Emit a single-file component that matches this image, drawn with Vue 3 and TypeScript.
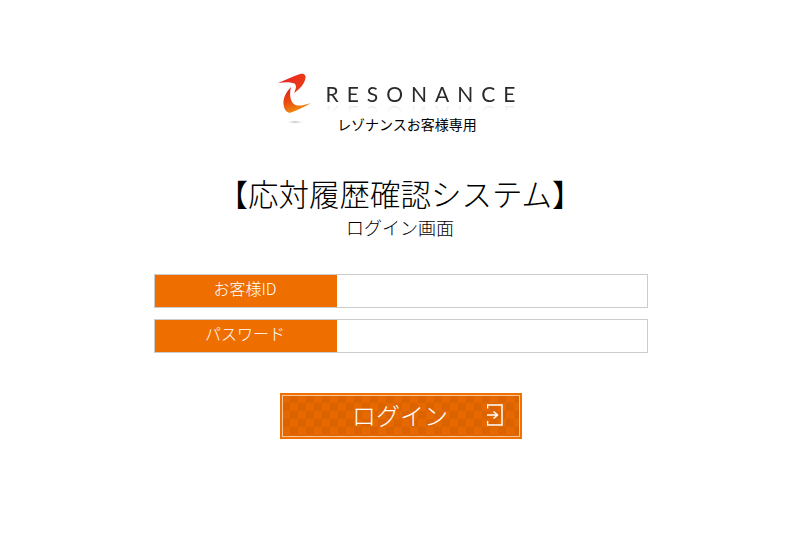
<script setup lang="ts">
import { ref } from 'vue'
const customerId = ref('')
const password = ref('')
</script>

<template>
  <main class="page">
    <header class="brand">
      <div class="logo-row">
        <svg class="mark" viewBox="278 72 36 53" width="36" height="53" aria-hidden="true">
          <defs>
            <linearGradient id="swoosh-a" x1="0" y1="0" x2="1" y2="0.3">
              <stop offset="0" stop-color="#e8202a" />
              <stop offset="1" stop-color="#ea3a16" />
            </linearGradient>
            <linearGradient id="swoosh-b" x1="0" y1="0" x2="0.4" y2="1">
              <stop offset="0" stop-color="#d81e22" />
              <stop offset="0.55" stop-color="#ea4a12" />
              <stop offset="1" stop-color="#f0900c" />
            </linearGradient>
            <radialGradient id="shade">
              <stop offset="0" stop-color="#b5b5b5" />
              <stop offset="1" stop-color="#ffffff" stop-opacity="0" />
            </radialGradient>
          </defs>
          <path d="M279 83 C287 79.500 295 76 301 74 C305 73 307 75 306.500 78 C305.500 84 301 89 295 93 C297.500 88 297.500 85 295.500 83.500 C290 81.500 285 82 279 83 Z" fill="url(#swoosh-a)" />
          <path d="M292 87 C287 92 284 98 284.500 104 C285 110 288 113.500 292 112.500 C298 110.500 305 107 312 103 C306 105 300 106.500 296.500 105 C291.500 103 290 95 292 87 Z" fill="url(#swoosh-b)" />
          <ellipse cx="296" cy="122" rx="10" ry="2" fill="url(#shade)" />
        </svg>
        <span class="wordmark">RESONANCE</span>
      </div>
      <p class="tagline">レゾナンスお客様専用</p>
    </header>

    <h1 class="title">【応対履歴確認システム】</h1>
    <p class="subtitle">ログイン画面</p>

    <form class="form" @submit.prevent>
      <label class="field">
        <span class="field-label">お客様ID</span>
        <input v-model="customerId" class="field-input" type="text" />
      </label>
      <label class="field">
        <span class="field-label">パスワード</span>
        <input v-model="password" class="field-input" type="password" />
      </label>
      <button class="login" type="submit">
        <span class="login-text">ログイン</span>
        <svg class="login-icon" viewBox="0 0 16 22" width="16" height="22" aria-hidden="true">
          <path d="M0.500 4.500 V1 H15 V21 H0.500 V17 M0 11 H10 M6.500 7.500 L10.500 11 L6.500 14.500" fill="none" stroke="#fff" stroke-width="1.500" />
        </svg>
      </button>
    </form>
  </main>
</template>

<style scoped>
.page {
  display: flex;
  flex-direction: column;
  align-items: center;
  width: 800px;
  height: 533px;
  padding-top: 72px;
  box-sizing: border-box;
  background: #fff;
  color: #000;
  font-family: "Noto Sans CJK JP", "Liberation Sans", sans-serif;
  font-weight: 300;
}
.brand {
  display: flex;
  flex-direction: column;
  align-items: center;
  height: 64px;
}
.logo-row {
  display: flex;
  align-items: flex-start;
  height: 50px;
  margin-left: -8px;
}
.mark {
  display: block;
  margin-right: 13px;
}
.wordmark {
  margin-top: 9px;
  font-family: "Lato", sans-serif;
  font-weight: 400;
  font-size: 21px;
  line-height: 26px;
  letter-spacing: 8px;
  margin-right: -8px;
  color: #2a2a2a;
  -webkit-box-reflect: below -6px linear-gradient(transparent 55%, rgba(0, 0, 0, 0.14));
}
.tagline {
  margin: -8px 0 0 14px;
  font-size: 14px;
  font-weight: 400;
  line-height: 20px;
}
.title {
  margin: 33px 0 0;
  font-size: 30.5px;
  font-weight: 300;
  line-height: 48px;
}
.subtitle {
  margin: -2px 0 0;
  font-size: 18px;
  line-height: 25px;
}
.form {
  display: flex;
  flex-direction: column;
  align-items: center;
  margin: 34px 0 0 2px;
}
.field {
  display: flex;
  width: 494px;
  height: 34px;
  margin-bottom: 11px;
  box-sizing: border-box;
  border: 1px solid #ccc;
}
.field-label {
  display: flex;
  align-items: center;
  justify-content: center;
  width: 182px;
  background: #ee6e00;
  color: #fff;
  font-family: "Noto Sans CJK JP", sans-serif;
  font-size: 16px;
  padding: 0 2px 6px 0;
  box-sizing: border-box;
}
.field-input {
  flex: 1;
  min-width: 0;
  border: 0;
  padding: 0 8px;
  background: #fff;
  outline: none;
}
.login {
  display: flex;
  align-items: center;
  justify-content: center;
  position: relative;
  width: 242px;
  height: 46px;
  margin-top: 29px;
  padding: 0 2px 2px 0;
  box-sizing: border-box;
  border: 2px solid #f07000;
  box-shadow: inset 0 0 0 1px #f9c79c;
  background-color: #e56900;
  background-image: conic-gradient(#dc6400 25%, transparent 0 50%, #dc6400 0 75%, transparent 0);
  background-size: 16px 16px;
  color: #fff;
  font-family: inherit;
  font-weight: 300;
  font-size: 24px;
  cursor: pointer;
}
.login-text {
  line-height: 1;
}
.login-icon {
  position: absolute;
  right: 17px;
  top: 9px;
}
</style>

<style>
html, body { margin: 0; background: #fff; }
</style>
